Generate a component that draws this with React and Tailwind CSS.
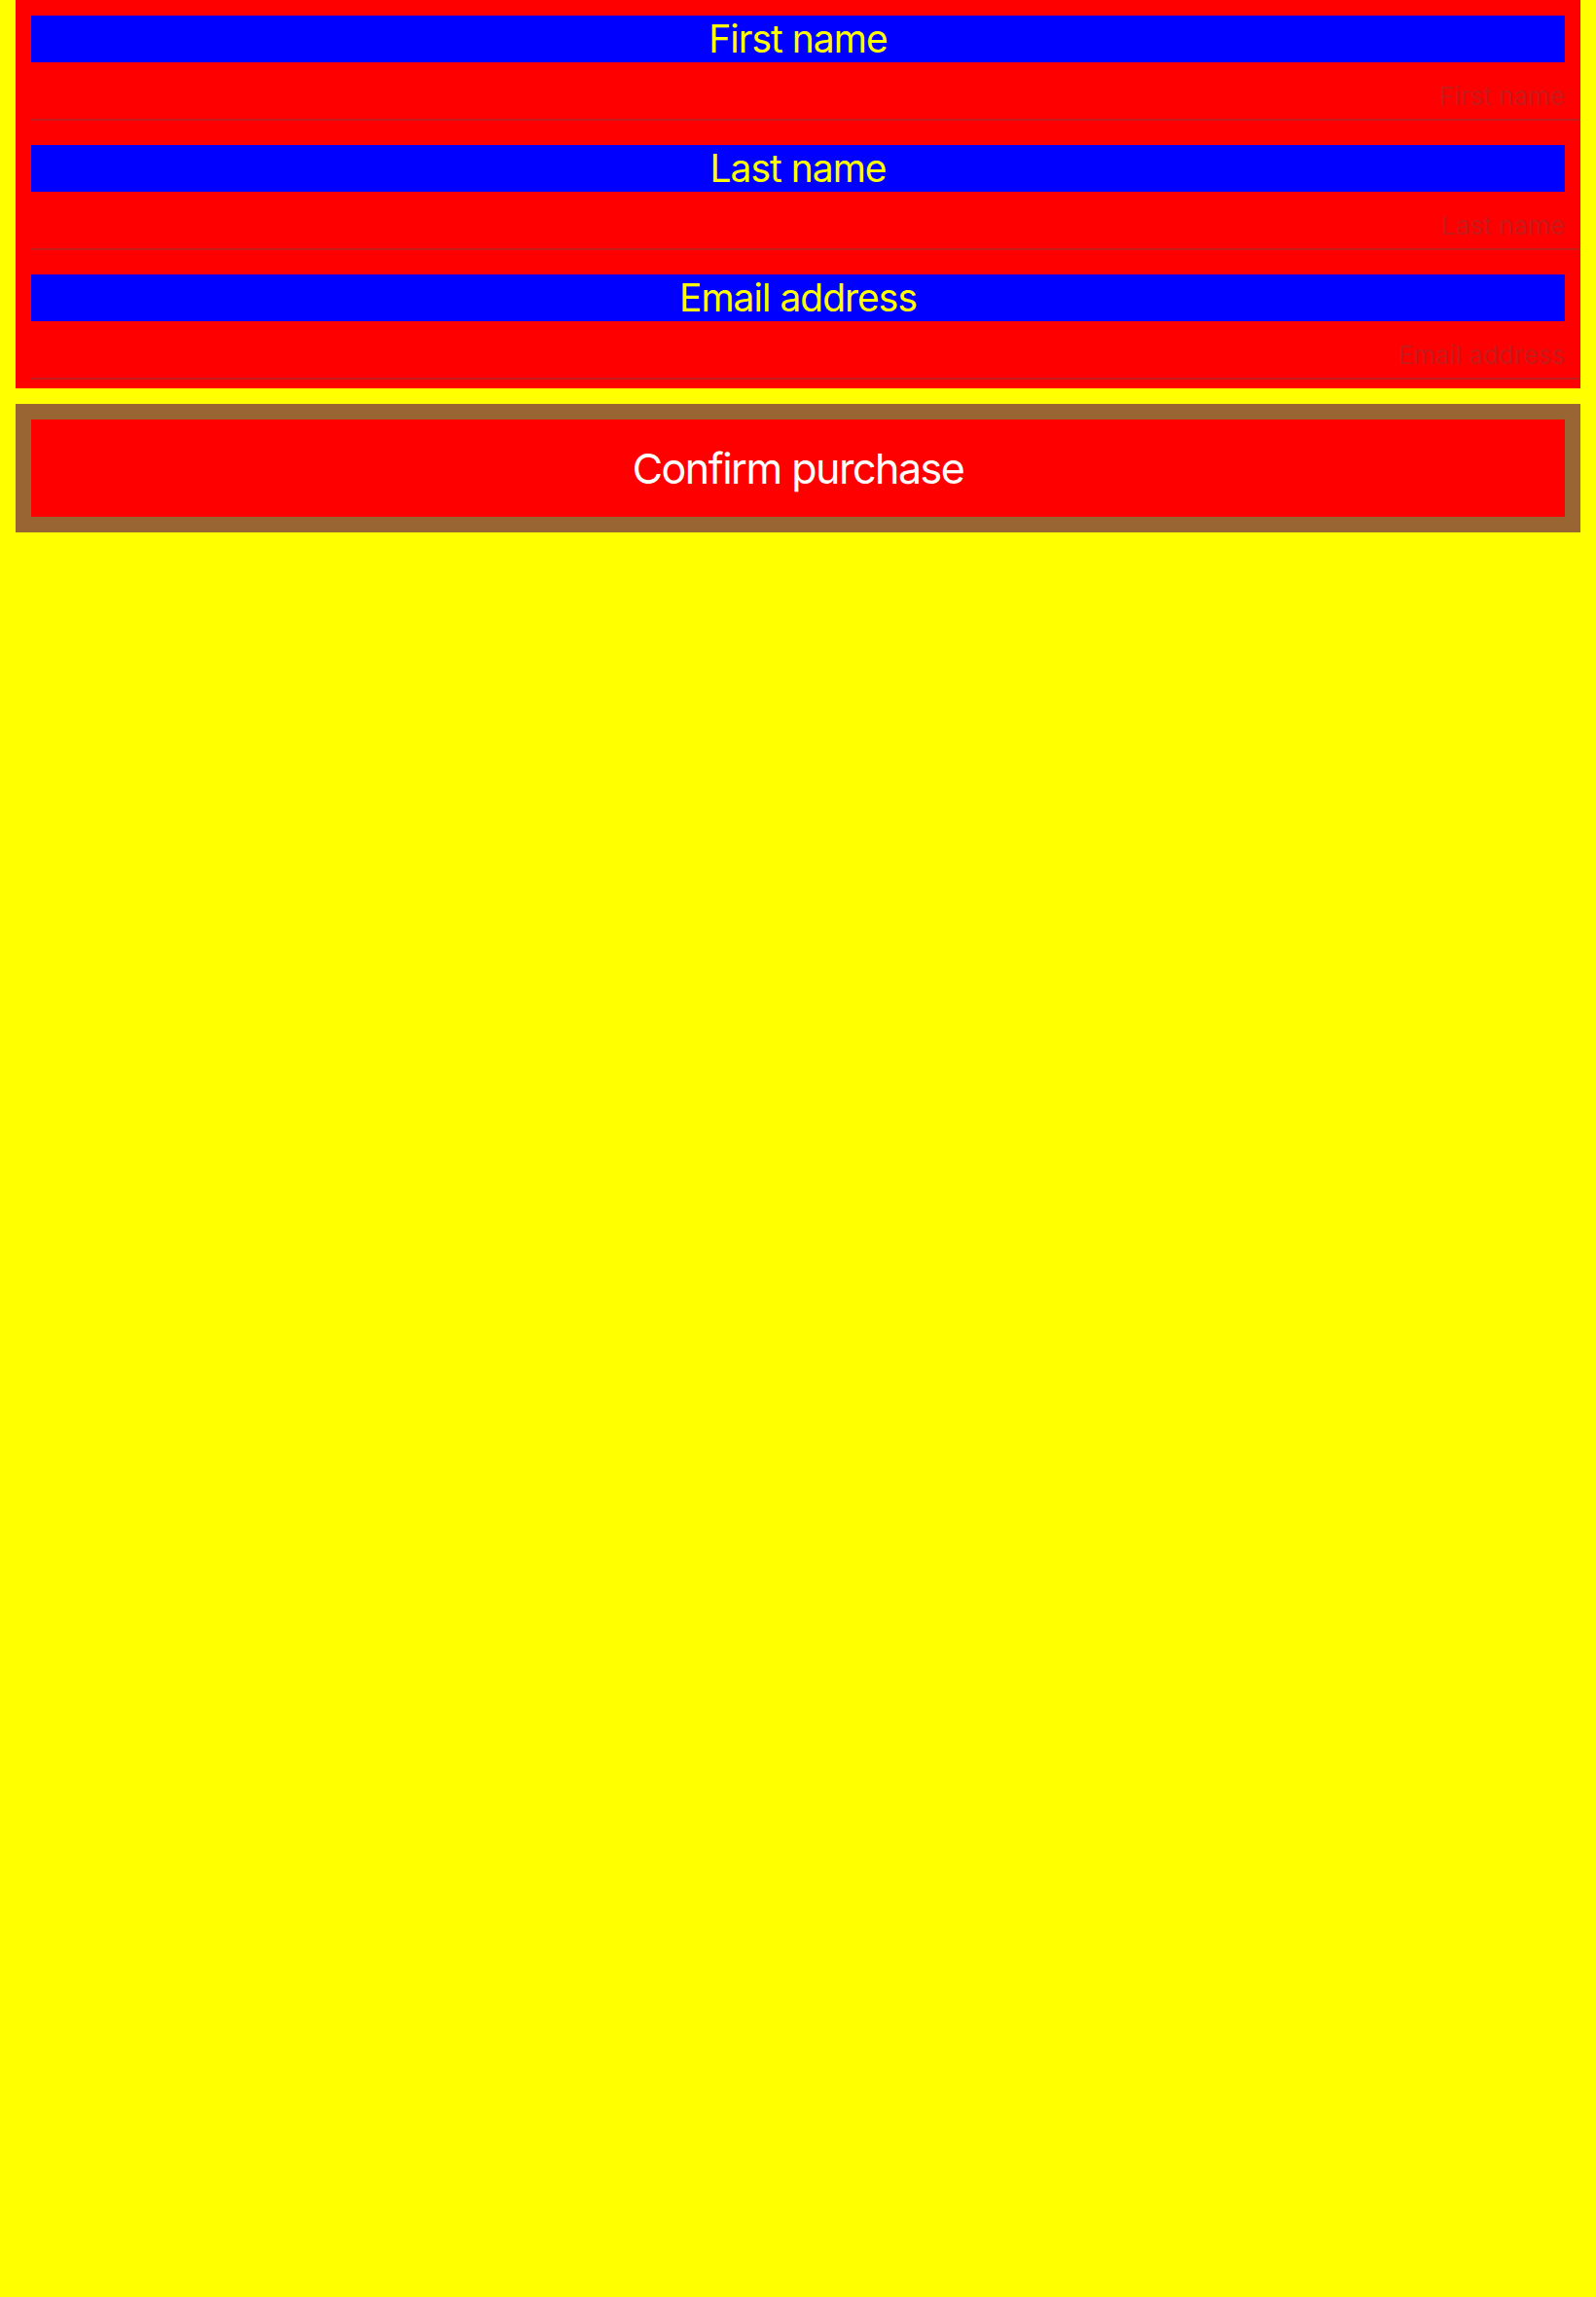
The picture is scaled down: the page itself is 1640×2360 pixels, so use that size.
import { useState } from "react";

const fields = [
  { key: "firstName", label: "First name" },
  { key: "lastName", label: "Last name" },
  { key: "email", label: "Email address" },
];

function App() {
  const [values, setValues] = useState({ firstName: "", lastName: "", email: "" });

  const handleChange = (key, value) => {
    setValues({ ...values, [key]: value });
  };

  return (
    <div className="min-h-screen bg-[#ffff00] px-4 font-['Inter',sans-serif]">
      {/* FORM */}
      <div className="bg-[#ff0000]">
        {fields.map((f) => (
          <div key={f.key} className="pt-4 pb-[9px]">
            <div className="mx-4 h-12 bg-[#0000ff] text-center text-[39px] leading-[48px] tracking-[-1px] text-[#ffff00]">
              {f.label}
            </div>
            <input
              value={values[f.key]}
              placeholder={f.label}
              onChange={(e) => handleChange(f.key, e.target.value)}
              className="ml-4 block h-[60px] w-[calc(100%-16px)] border-b-2 border-[#c41c1c] bg-transparent pr-4 pt-[10px] text-right text-[26px] text-black outline-none placeholder:text-[#c81a1a]"
            />
          </div>
        ))}
      </div>

      {/* ACTION */}
      <div className="mt-4 bg-[#996633] p-4">
        <button className="block h-[100px] w-full bg-[#ff0000] text-center text-[43px] tracking-[-1.5px] text-white">
          Confirm purchase
        </button>
      </div>
    </div>
  );
}

export default App;
